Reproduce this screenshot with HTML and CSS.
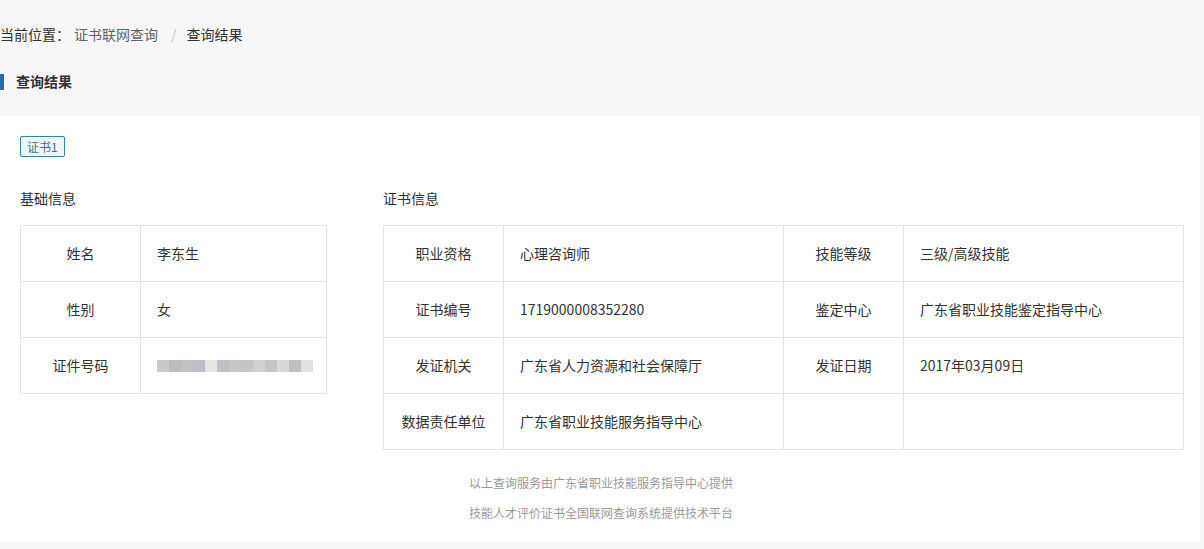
FILE: index.html
```html
<!DOCTYPE html>
<html lang="zh-CN">
<head>
<meta charset="utf-8">
<title>查询结果</title>
<link rel="stylesheet" href="styles.css">
</head>
<body>
<div class="breadcrumb">
  <span class="bc-label">当前位置：</span>
  <span class="bc-link">证书联网查询</span>
  <span class="bc-sep">/</span>
  <span class="bc-current">查询结果</span>
</div>
<div class="page-title">查询结果</div>
<div class="panel">
  <div class="tabs"><span class="tag">证书1</span></div>
  <div class="sections">
    <div class="sec sec-basic">
      <div class="sec-title">基础信息</div>
      <table class="info basic">
        <tr><td class="lbl">姓名</td><td class="val">李东生</td></tr>
        <tr><td class="lbl">性别</td><td class="val">女</td></tr>
        <tr><td class="lbl">证件号码</td><td class="val">
          <div class="mosaic">
            <span style="background:#cbc8cb"></span><span style="background:#bbbdba"></span><span style="background:#c1c0c8"></span><span style="background:#bfbdcb"></span><span style="background:#e6e5e2"></span><span style="background:#bdc0c4"></span><span style="background:#c8c5cb"></span><span style="background:#c7c4c9"></span><span style="background:#cdd1d4"></span><span style="background:#c6c3c6"></span><span style="background:#d6d9dc"></span><span style="background:#bec1c1"></span><span style="background:#e1e2e6"></span>
          </div>
        </td></tr>
      </table>
    </div>
    <div class="sec sec-cert">
      <div class="sec-title">证书信息</div>
      <table class="info cert">
        <tr><td class="lbl">职业资格</td><td class="val">心理咨询师</td><td class="lbl">技能等级</td><td class="val">三级/高级技能</td></tr>
        <tr><td class="lbl">证书编号</td><td class="val">1719000008352280</td><td class="lbl">鉴定中心</td><td class="val">广东省职业技能鉴定指导中心</td></tr>
        <tr><td class="lbl">发证机关</td><td class="val">广东省人力资源和社会保障厅</td><td class="lbl">发证日期</td><td class="val">2017年03月09日</td></tr>
        <tr><td class="lbl">数据责任单位</td><td class="val">广东省职业技能服务指导中心</td><td class="lbl"></td><td class="val"></td></tr>
      </table>
    </div>
  </div>
  <div class="footer">
    <p>以上查询服务由广东省职业技能服务指导中心提供</p>
    <p>技能人才评价证书全国联网查询系统提供技术平台</p>
  </div>
</div>
</body>
</html>
```

FILE: styles.css
```css
html, body {
  margin: 0;
  padding: 0;
}
body {
  background: #f7f7f7;
  font-family: "Microsoft YaHei", "Noto Sans CJK SC", "Noto Sans", sans-serif;
  font-size: 14px;
  color: #333;
  width: 1204px;
}
.breadcrumb {
  padding-top: 24px;
  height: 20px;
  line-height: 20px;
  display: flex;
  align-items: center;
}
.bc-label { color: #303133; }
.bc-link { color: #606266; margin-left: 4px; }
.bc-sep { color: #c0c4cc; margin: 0 10px 0 13px; }
.bc-current { color: #303133; }
.page-title {
  margin-top: 30px;
  height: 16px;
  line-height: 15px;
  border-left: 4px solid #1f6fb2;
  padding-left: 12px;
  font-weight: bold;
  color: #303133;
}
.panel {
  margin-top: 26px;
  width: 1200px;
  background: #fff;
  padding: 20px 16px 14px 20px;
  box-sizing: border-box;
}
.tabs { height: 21px; display: flex; }
.tag {
  display: inline-block;
  height: 21px;
  box-sizing: border-box;
  padding: 0 6px;
  border: 1px solid #3a7db0;
  border-radius: 2px;
  background: #ecf6fd;
  color: #4d6d8a;
  font-size: 12px;
  line-height: 19px;
}
.sections {
  display: flex;
  margin-top: 32px;
  gap: 56px;
  align-items: flex-start;
}
.sec-title {
  height: 20px;
  line-height: 19px;
  color: #303133;
  margin-bottom: 16px;
}
.sec-basic { width: 307px; }
.sec-cert { width: 801px; }
.info {
  border-collapse: collapse;
  width: 100%;
  table-layout: fixed;
}
.info td {
  border: 1px solid #e4e4e4;
  height: 53px;
  padding: 0 0 2px 0;
  color: #333;
}
.info .lbl {
  width: 119px;
  text-align: center;
}
.info .val {
  padding-left: 16px;
}
.cert .val { width: 263px; }
.mosaic {
  display: flex;
  height: 12px;
  margin-top: 2px;
}
.mosaic span {
  width: 12px;
  height: 12px;
}
.footer {
  margin-top: 18px;
  text-align: center;
  color: #999;
  font-size: 12px;
  padding-right: 2px;
}
.footer p {
  margin: 0;
  line-height: 30px;
}
```
